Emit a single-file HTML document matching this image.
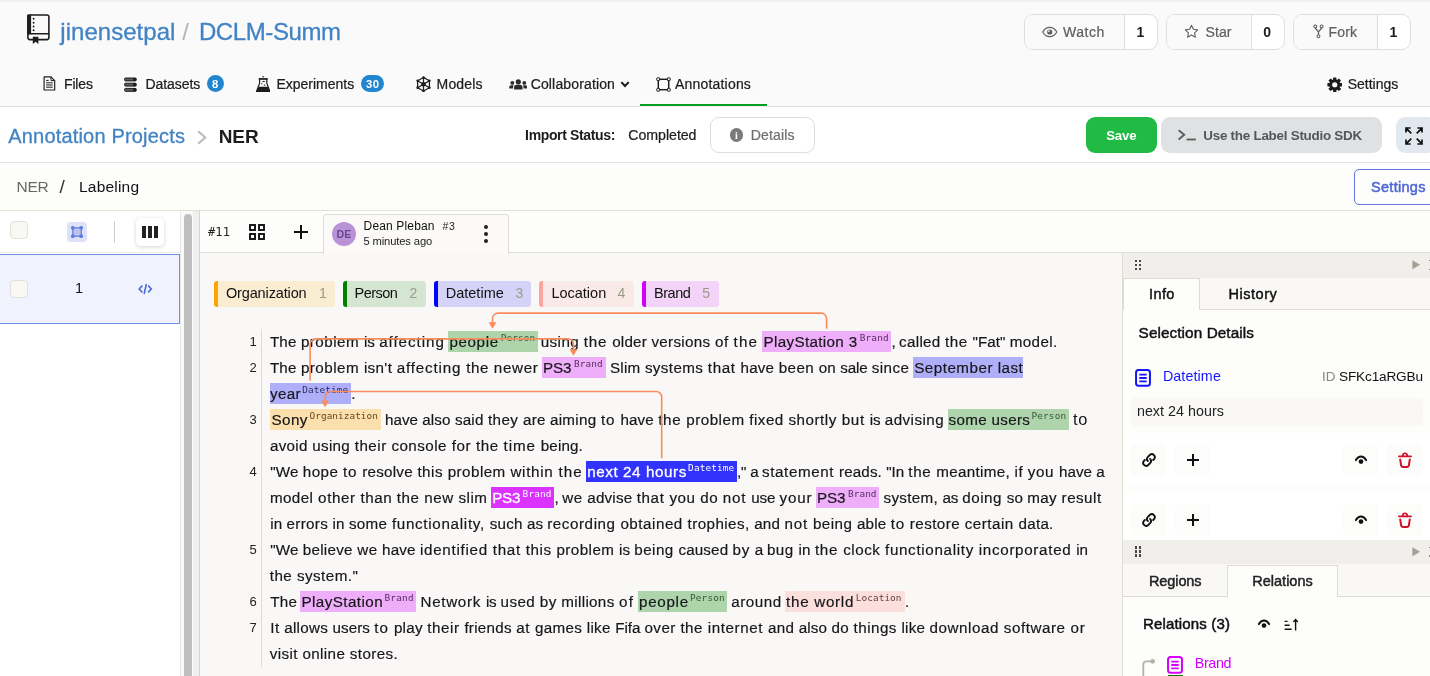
<!DOCTYPE html>
<html lang="en">
<head>
<meta charset="utf-8">
<title>jinensetpal/DCLM-Summ - Annotations</title>
<style>
html,body{margin:0;padding:0;}
body{width:1430px;height:676px;overflow:hidden;background:#fdfdfc;font-family:'Liberation Sans',sans-serif;}
#app{position:relative;width:1430px;height:676px;overflow:hidden;will-change:transform;}
#app div,#app span.t,#app svg{position:absolute;}
#app div{box-sizing:border-box;}
span.t{white-space:pre;}
span.b{font-size:15.2px;line-height:21px;color:#17161a;-webkit-text-stroke:.18px currentColor;}
</style>
</head>
<body>
<div id="app">
<div style="left:0.0px;top:0.0px;width:1430.0px;height:106.0px;background:#fafafa;"></div>
<div style="left:0.0px;top:0.0px;width:1430.0px;height:3.0px;background:linear-gradient(#ebebeb,#f4f4f4 40%,#fafafa);"></div>
<div style="left:0.0px;top:106.0px;width:1430.0px;height:1.0px;background:#dcdcdc;"></div>
<div style="left:0.0px;top:107.0px;width:1430.0px;height:55.0px;background:#ffffff;"></div>
<div style="left:0.0px;top:162.0px;width:1430.0px;height:1.0px;background:#e4e4e4;"></div>
<svg style="left:26.0px;top:12.5px;" width="25.0" height="32.0" viewBox="0 0 25 32"><rect x="1.9" y="2" width="21" height="24.6" rx="2" fill="none" stroke="#1e1e1e" stroke-width="1.6"/><rect x="1.2" y="1.6" width="3.9" height="19.6" fill="#1e1e1e"/><rect x="1.5" y="20" width="21.5" height="1.5" fill="#1e1e1e"/><circle cx="7.6" cy="5.8" r="0.95" fill="#1e1e1e"/><circle cx="7.6" cy="9.7" r="0.95" fill="#1e1e1e"/><circle cx="7.6" cy="13.5" r="0.95" fill="#1e1e1e"/><circle cx="7.6" cy="17.3" r="0.95" fill="#1e1e1e"/><path d="M6.8 23.8h5.6v7.2l-2.8-2.3-2.8 2.3z" fill="#1e1e1e"/></svg>
<span class="t" style="left:60.3px;top:15.0px;line-height:34px;font-size:24px;color:#4183c4;letter-spacing:0.038px;-webkit-text-stroke:.3px currentColor;">jinensetpal</span>
<span class="t" style="left:182.3px;top:15.0px;line-height:34px;font-size:24px;color:#b3b3b3;">/</span>
<span class="t" style="left:198.9px;top:15.0px;line-height:34px;font-size:24px;color:#4183c4;letter-spacing:-0.400px;-webkit-text-stroke:.3px currentColor;">DCLM-Summ</span>
<div style="left:1024px;top:14px;width:133.5px;height:35.5px;border:1px solid #dededf;border-radius:9px;background:#fff;overflow:hidden"><div style="left:0;top:0;width:100px;height:34px;background:#fafafa;border-right:1px solid #dededf"></div></div>
<div style="left:1166px;top:14px;width:118.5px;height:35.5px;border:1px solid #dededf;border-radius:9px;background:#fff;overflow:hidden"><div style="left:0;top:0;width:85px;height:34px;background:#fafafa;border-right:1px solid #dededf"></div></div>
<div style="left:1293px;top:14px;width:117.5px;height:35.5px;border:1px solid #dededf;border-radius:9px;background:#fff;overflow:hidden"><div style="left:0;top:0;width:83.5px;height:34px;background:#fafafa;border-right:1px solid #dededf"></div></div>
<svg style="left:1042.0px;top:25.5px;" width="15.5" height="12.0" viewBox="0 0 15.5 12"><path d="M0.7 6C2.4 2.9 4.9 1.3 7.75 1.3S13.1 2.9 14.8 6C13.1 9.1 10.6 10.7 7.75 10.7S2.4 9.1 0.7 6z" fill="none" stroke="#5f5f5f" stroke-width="1.2"/><circle cx="7.75" cy="6" r="2.6" fill="#5f5f5f"/><circle cx="6.9" cy="5.1" r="0.9" fill="#fafafa"/></svg>
<span class="t" style="left:1063.1px;top:22.0px;line-height:20px;font-size:14px;color:#5f5f5f;letter-spacing:0.517px;-webkit-text-stroke:.22px currentColor;">Watch</span>
<span class="t" style="left:1136.6px;top:22.0px;line-height:20px;font-size:14px;color:#1b1c1d;font-weight:700;">1</span>
<svg style="left:1184.0px;top:24.0px;" width="15.0" height="15.0" viewBox="0 0 15 15"><path d="M7.5 1.3l1.9 4 4.3.6-3.1 3 .75 4.3L7.5 11.1 3.65 13.2l.75-4.3-3.1-3 4.3-.6z" fill="none" stroke="#5f5f5f" stroke-width="1.1" stroke-linejoin="round"/></svg>
<span class="t" style="left:1205.6px;top:22.0px;line-height:20px;font-size:14px;color:#5f5f5f;letter-spacing:0.028px;-webkit-text-stroke:.22px currentColor;">Star</span>
<span class="t" style="left:1263.2px;top:22.0px;line-height:20px;font-size:14px;color:#1b1c1d;font-weight:700;">0</span>
<svg style="left:1313.0px;top:24.0px;" width="11.0" height="15.0" viewBox="0 0 11 15"><g fill="none" stroke="#5f5f5f" stroke-width="1.05"><circle cx="2.3" cy="2.4" r="1.45"/><circle cx="8.6" cy="2.4" r="1.45"/><circle cx="5.45" cy="12.2" r="1.45"/><path d="M2.5 3.9C2.9 6.3 5.45 6.4 5.45 8.6V10.7M8.4 3.9C8 6.3 5.45 6.4 5.45 8.6" stroke-width="1.25"/></g></svg>
<span class="t" style="left:1328.6px;top:22.0px;line-height:20px;font-size:14px;color:#5f5f5f;letter-spacing:0.138px;-webkit-text-stroke:.22px currentColor;">Fork</span>
<span class="t" style="left:1389.4px;top:22.0px;line-height:20px;font-size:14px;color:#1b1c1d;font-weight:700;">1</span>
<svg style="left:42.5px;top:76.3px;" width="13.0" height="15.0" viewBox="0 0 13 15"><path d="M1.1 .9h6.9l3.7 3.7v9.4H1.1z" fill="none" stroke="#1b1c1d" stroke-width="1.15" stroke-linejoin="round"/><path d="M8 .9v3.7h3.7" fill="none" stroke="#1b1c1d" stroke-width="1"/><path d="M3.1 4.4h2.6M3.1 6.8h6.6M3.1 9h6.6M3.1 11.2h6.6" stroke="#1b1c1d" stroke-width="1"/></svg>
<span class="t" style="left:64.0px;top:74.0px;line-height:20px;font-size:14px;color:#1b1c1d;letter-spacing:-0.151px;-webkit-text-stroke:.22px currentColor;">Files</span>
<svg style="left:124.0px;top:76.5px;" width="13.0" height="15.0" viewBox="0 0 13 15"><g fill="#5c5c5c" stroke="#1b1c1d" stroke-width="1"><rect x=".6" y="1" width="11.6" height="2.9" rx="1"/><rect x=".6" y="6.2" width="11.6" height="2.9" rx="1"/><rect x=".6" y="11.4" width="11.6" height="2.9" rx="1"/></g><g fill="#1b1c1d"><rect x="9.2" y="1" width="3" height="2.9"/><rect x="9.2" y="6.2" width="3" height="2.9"/><rect x="9.2" y="11.4" width="3" height="2.9"/></g></svg>
<span class="t" style="left:145.4px;top:74.0px;line-height:20px;font-size:14px;color:#1b1c1d;letter-spacing:-0.049px;-webkit-text-stroke:.22px currentColor;">Datasets</span>
<div style="left:207px;top:75px;width:17px;height:17px;border-radius:9px;background:#2185d0"></div>
<span class="t" style="left:211.9px;top:76.0px;line-height:16px;font-size:11.3px;color:#fff;font-weight:700;">8</span>
<svg style="left:255.8px;top:75.5px;" width="14.4" height="16.5" viewBox="0 0 14.4 16.5"><path d="M3.6 2.9h7.2v4.3l3 7.9c.2.6-.1.9-.7.9H1.3c-.6 0-.9-.3-.7-.9l3-7.9z" fill="none" stroke="#1b1c1d" stroke-width="1.2"/><path d="M2.6 10.7h9.2l2.2 4.7c.2.4 0 .7-.5.7H.9c-.5 0-.7-.3-.5-.7z" fill="#1b1c1d"/><rect x="2.6" y="2.3" width="9.2" height="1.3" fill="#1b1c1d"/><rect x="6.3" y=".3" width="1.8" height="1" fill="#1b1c1d"/><rect x="6.4" y="5" width="2.4" height="1" fill="#1b1c1d"/><rect x="5.2" y="7.2" width="1.2" height="1" fill="#1b1c1d"/><rect x="7.8" y="8.6" width="1.6" height="1" fill="#1b1c1d"/></svg>
<span class="t" style="left:276.4px;top:74.0px;line-height:20px;font-size:14px;color:#1b1c1d;-webkit-text-stroke:.22px currentColor;">Experiments</span>
<div style="left:361px;top:75.2px;width:23px;height:17px;border-radius:9px;background:#2185d0"></div>
<span class="t" style="left:365.9px;top:76.0px;line-height:16px;font-size:11.3px;color:#fff;font-weight:700;letter-spacing:0.503px;">30</span>
<svg style="left:416.2px;top:75.7px;" width="15.0" height="16.5" viewBox="0 0 15 16.5"><g fill="none" stroke="#1b1c1d" stroke-width="1.25"><path d="M7.5 1.4l5.9 3.4v6.9l-5.9 3.4-5.9-3.4V4.8z"/><path d="M7.5 1.4v13.7M1.6 4.8l11.8 6.9M13.4 4.8L1.6 11.7"/></g><g fill="#1b1c1d"><circle cx="7.5" cy="8.25" r="2.3"/><circle cx="7.5" cy="1.4" r="1.25"/><circle cx="7.5" cy="15.1" r="1.25"/><circle cx="1.6" cy="4.8" r="1.25"/><circle cx="13.4" cy="4.8" r="1.25"/><circle cx="1.6" cy="11.7" r="1.25"/><circle cx="13.4" cy="11.7" r="1.25"/></g></svg>
<span class="t" style="left:436.6px;top:74.0px;line-height:20px;font-size:14px;color:#1b1c1d;letter-spacing:0.153px;-webkit-text-stroke:.22px currentColor;">Models</span>
<svg style="left:508.5px;top:79.3px;" width="18.5" height="10.7" viewBox="0 0 18.5 10.7"><g fill="#2a2a2a"><circle cx="9.3" cy="2.8" r="2.6"/><path d="M5.1 10.4V8.100c0-1.500 1-2.400 2.400-2.400h3.600c1.400 0 2.400.9 2.400 2.400v2.300z"/><circle cx="3.3" cy="3.9" r="1.95"/><path d="M.2 9.600V8.300c0-1.300.8-2 2-2h2.600c-.5.500-.7 1.100-.7 1.900v1.400z"/><circle cx="15.300" cy="3.900" r="1.950"/><path d="M18.400 9.600V8.300c0-1.300-.8-2-2-2h-2.600c.5.500.7 1.100.7 1.900v1.400z"/></g></svg>
<span class="t" style="left:530.7px;top:74.0px;line-height:20px;font-size:14px;color:#1b1c1d;letter-spacing:0.143px;-webkit-text-stroke:.22px currentColor;">Collaboration</span>
<svg style="left:619.6px;top:80.2px;" width="10.0" height="9.0" viewBox="0 0 10 9"><path d="M1.3 2.1l3.7 3.9 3.700-3.900" fill="none" stroke="#1b1c1d" stroke-width="2.1"/></svg>
<svg style="left:655.5px;top:77.0px;" width="15.0" height="15.0" viewBox="0 0 15 15"><rect x="2.3" y="2.3" width="10.4" height="10.4" fill="none" stroke="#1b1c1d" stroke-width="1.45"/><g fill="#fafafa" stroke="#1b1c1d" stroke-width="1"><rect x=".8" y=".8" width="2.8" height="2.8" rx=".6"/><rect x="11.4" y=".8" width="2.8" height="2.8" rx=".6"/><rect x=".8" y="11.4" width="2.8" height="2.8" rx=".6"/><rect x="11.4" y="11.4" width="2.8" height="2.8" rx=".6"/></g></svg>
<span class="t" style="left:675.0px;top:74.0px;line-height:20px;font-size:14px;color:#1b1c1d;letter-spacing:0.193px;-webkit-text-stroke:.22px currentColor;">Annotations</span>
<div style="left:640.0px;top:103.0px;width:127.0px;height:1.0px;background:#fdfdfd;"></div>
<div style="left:640.0px;top:104.0px;width:127.0px;height:2.2px;background:#069d26;"></div>
<div style="left:640.0px;top:106.2px;width:127.0px;height:0.8px;background:#f6eef6;"></div>
<svg style="left:1326.5px;top:76.5px;" width="15.5" height="15.5" viewBox="0 0 16 16"><g transform="translate(8 8)" fill="#1b1c1d"><rect x="-1.7" y="-7.6" width="3.4" height="4" rx=".5" transform="rotate(0)"/><rect x="-1.7" y="-7.6" width="3.4" height="4" rx=".5" transform="rotate(45)"/><rect x="-1.7" y="-7.6" width="3.4" height="4" rx=".5" transform="rotate(90)"/><rect x="-1.7" y="-7.6" width="3.4" height="4" rx=".5" transform="rotate(135)"/><rect x="-1.7" y="-7.6" width="3.4" height="4" rx=".5" transform="rotate(180)"/><rect x="-1.7" y="-7.6" width="3.4" height="4" rx=".5" transform="rotate(225)"/><rect x="-1.7" y="-7.6" width="3.4" height="4" rx=".5" transform="rotate(270)"/><rect x="-1.7" y="-7.6" width="3.4" height="4" rx=".5" transform="rotate(315)"/><circle r="5.7"/><circle r="2.7" fill="#fafafa"/></g></svg>
<span class="t" style="left:1347.7px;top:74.0px;line-height:20px;font-size:14px;color:#1b1c1d;-webkit-text-stroke:.22px currentColor;">Settings</span>
<span class="t" style="left:8.3px;top:122.0px;line-height:28px;font-size:20px;color:#4183c4;letter-spacing:0.177px;-webkit-text-stroke:.3px currentColor;">Annotation Projects</span>
<svg style="left:196.0px;top:128.5px;" width="12.0" height="17.0" viewBox="0 0 12 17"><path d="M2.2 2.3l7 6.2-7 6.2" fill="none" stroke="#bcbcbc" stroke-width="2.2"/></svg>
<span class="t" style="left:218.8px;top:123.0px;line-height:27px;font-size:19px;color:#1b1c1d;font-weight:700;letter-spacing:-0.144px;">NER</span>
<span class="t" style="left:525.1px;top:125.0px;line-height:20px;font-size:14px;color:#1b1c1d;font-weight:700;letter-spacing:-0.356px;">Import Status:</span>
<span class="t" style="left:628.3px;top:125.0px;line-height:20px;font-size:14.2px;color:#1b1c1d;letter-spacing:-0.051px;-webkit-text-stroke:.22px currentColor;">Completed</span>
<div style="left:710px;top:117px;width:105px;height:36px;border:1px solid #dededf;border-radius:9px;background:#fff"></div>
<div style="left:730px;top:128.3px;width:13.3px;height:13.3px;border-radius:7px;background:#7a7a7a"></div>
<span class="t" style="left:735.1px;top:129.0px;line-height:14px;font-size:10px;color:#fff;font-weight:700;font-family:'Liberation Serif',serif;">i</span>
<span class="t" style="left:750.7px;top:125.0px;line-height:20px;font-size:14.1px;color:#6f6f6f;letter-spacing:0.138px;-webkit-text-stroke:.22px currentColor;">Details</span>
<div style="left:1086px;top:117px;width:71px;height:36px;border-radius:9px;background:#21ba45"></div>
<span class="t" style="left:1106.2px;top:127.0px;line-height:18px;font-size:13.2px;color:#fff;font-weight:700;letter-spacing:-0.135px;">Save</span>
<div style="left:1161px;top:117px;width:221.3px;height:36px;border-radius:9px;background:#e0e1e2"></div>
<svg style="left:1177.0px;top:127.5px;" width="20.0" height="14.0" viewBox="0 0 20 14"><path d="M1.6 2.2l5.6 4.6-5.6 4.6" fill="none" stroke="#5b5b5b" stroke-width="1.9"/><rect x="9.6" y="10.6" width="9.2" height="1.8" fill="#5b5b5b"/></svg>
<span class="t" style="left:1203.3px;top:126.0px;line-height:19px;font-size:13.4px;color:#555657;font-weight:700;letter-spacing:-0.242px;">Use the Label Studio SDK</span>
<div style="left:1396px;top:117px;width:40px;height:36px;border-radius:9px;background:#e2e8f0"></div>
<svg style="left:1404.0px;top:125.5px;" width="20.0" height="20.0" viewBox="0 0 20 20"><g fill="none" stroke="#111" stroke-width="1.7"><path d="M2 6.6V2h4.6M2.3 2.3l5 5M18 6.6V2h-4.6M17.7 2.3l-5 5M2 13.4V18h4.6M2.3 17.7l5-5M18 13.4V18h-4.6M17.7 17.7l-5-5"/></g></svg>
<div style="left:0.0px;top:163.0px;width:1430.0px;height:47.0px;background:#fdfdfc;"></div>
<div style="left:0.0px;top:210.0px;width:1430.0px;height:1.0px;background:#e3e0d8;"></div>
<span class="t" style="left:16.5px;top:176.0px;line-height:22px;font-size:15.5px;color:#6b6860;letter-spacing:-0.307px;">NER</span>
<span class="t" style="left:59.5px;top:173.0px;line-height:27px;font-size:19px;color:#33312c;">/</span>
<span class="t" style="left:79.0px;top:176.0px;line-height:22px;font-size:15.5px;color:#111;letter-spacing:0.208px;">Labeling</span>
<div style="left:1354px;top:169px;width:90px;height:36px;border:1px solid #6478dc;border-radius:5px;background:#fdfdfc"></div>
<span class="t" style="left:1371.0px;top:177.0px;line-height:20px;font-size:14.5px;color:#4f66d4;letter-spacing:0.294px;-webkit-text-stroke:.5px currentColor;">Settings</span>
<div style="left:0.0px;top:211.0px;width:180.0px;height:465.0px;background:#ffffff;"></div>
<div style="left:180.0px;top:211.0px;width:1.0px;height:465.0px;background:#e8e8e8;"></div>
<div style="left:181.0px;top:211.0px;width:12.0px;height:465.0px;background:#fafafa;"></div>
<div style="left:184.2px;top:214px;width:7.8px;height:480px;border-radius:4px;background:#bfbfbf"></div>
<div style="left:193.0px;top:211.0px;width:6.3px;height:465.0px;background:#f0f0f0;"></div>
<div style="left:199.2px;top:211.0px;width:1.0px;height:465.0px;background:#d4d4d4;"></div>
<div style="left:10px;top:221px;width:18px;height:18px;border:1px solid #e3e1d8;border-radius:4px;background:#f9f8f5"></div>
<div style="left:67px;top:222px;width:20px;height:20px;border-radius:4px;background:#dde2f8"></div>
<svg style="left:70.0px;top:225.0px;" width="14.0" height="14.0" viewBox="0 0 14 14"><rect x="2.8" y="2.8" width="8.4" height="8.4" fill="#b9c3f2" stroke="#617ada" stroke-width="1.2"/><g fill="#617ada"><circle cx="2.8" cy="2.8" r="1.9"/><circle cx="11.2" cy="2.8" r="1.9"/><circle cx="2.8" cy="11.2" r="1.9"/><circle cx="11.2" cy="11.2" r="1.9"/></g></svg>
<div style="left:114.2px;top:221.0px;width:1.0px;height:22.0px;background:#cfcdc8;"></div>
<div style="left:136px;top:218px;width:28px;height:28px;border-radius:5px;background:#fff;box-shadow:0 1px 4px rgba(0,0,0,.18)"></div>
<div style="left:141.8px;top:226.0px;width:4.0px;height:12.0px;background:#222;"></div>
<div style="left:147.9px;top:226.0px;width:4.0px;height:12.0px;background:#222;"></div>
<div style="left:154.0px;top:226.0px;width:4.0px;height:12.0px;background:#222;"></div>
<div style="left:0.0px;top:252.0px;width:180.0px;height:1.0px;background:#ece6e6;"></div>
<div style="left:0px;top:254px;width:180px;height:69.5px;border:1px solid #6f8fe3;border-left:none;background:#f0f2fd"></div>
<div style="left:10px;top:280px;width:18px;height:18px;border:1px solid #e3e1d8;border-radius:4px;background:#f9f8f5"></div>
<span class="t" style="left:75.0px;top:278.0px;line-height:20px;font-size:14.5px;color:#111;">1</span>
<svg style="left:138.0px;top:283.0px;" width="14.5" height="12.0" viewBox="0 0 14.5 12"><g fill="none" stroke="#4a6bd8" stroke-width="1.6"><path d="M4.3 2.6L1.2 6l3.1 3.4M10.2 2.6L13.3 6l-3.1 3.4M8.4 1L6.1 11"/></g></svg>
<div style="left:200.0px;top:211.0px;width:1230.0px;height:41.5px;background:#fdfdfc;"></div>
<div style="left:200.0px;top:252.0px;width:923.0px;height:424.0px;background:#f9f8f6;"></div>
<div style="left:200.0px;top:252.0px;width:1230.0px;height:1.0px;background:#e3e0d8;"></div>
<span class="t" style="left:207.9px;top:224.0px;line-height:17px;font-size:12px;color:#222;font-family:'DejaVu Sans Mono','Liberation Mono',monospace;letter-spacing:0.194px;">#11</span>
<svg style="left:249.0px;top:224.0px;" width="16.0" height="16.0" viewBox="0 0 16 16"><g fill="none" stroke="#111" stroke-width="1.9"><rect x="1" y="1" width="5" height="5"/><rect x="10" y="1" width="5" height="5"/><rect x="1" y="10" width="5" height="5"/><rect x="10" y="10" width="5" height="5"/></g></svg>
<div style="left:300.0px;top:225.0px;width:1.8px;height:14.0px;background:#111;"></div>
<div style="left:293.9px;top:231.1px;width:14.0px;height:1.8px;background:#111;"></div>
<div style="left:323px;top:214px;width:186px;height:39.5px;border:1px solid #e0ddd5;border-bottom:none;border-radius:4px 4px 0 0;background:#fbfaf8"></div>
<div style="left:332px;top:222px;width:24px;height:24px;border-radius:12px;background:#b993d6"></div>
<span class="t" style="left:336.4px;top:227.0px;line-height:15px;font-size:10.6px;color:#6a4693;font-weight:700;letter-spacing:0.250px;">DE</span>
<span class="t" style="left:363.6px;top:218.0px;line-height:17px;font-size:12px;color:#111;letter-spacing:0.151px;">Dean Pleban</span>
<span class="t" style="left:442.5px;top:219.0px;line-height:15px;font-size:10.5px;color:#222;letter-spacing:0.734px;">#3</span>
<span class="t" style="left:363.4px;top:233.0px;line-height:16px;font-size:11.2px;color:#222;letter-spacing:-0.116px;">5 minutes ago</span>
<div style="left:483.9px;top:225.3px;width:4px;height:4px;border-radius:2px;background:#222"></div>
<div style="left:483.9px;top:231.9px;width:4px;height:4px;border-radius:2px;background:#222"></div>
<div style="left:483.9px;top:238.5px;width:4px;height:4px;border-radius:2px;background:#222"></div>
<div style="left:214px;top:281px;width:120.7px;height:26px;border-radius:3px;background:#faecd1;border-left:4px solid #ffa500"></div>
<span class="t" style="left:225.9px;top:283.0px;line-height:20px;font-size:14.5px;color:#111;letter-spacing:-0.131px;">Organization</span>
<span class="t" style="left:318.9px;top:283.0px;line-height:20px;font-size:14px;color:#9e9889;">1</span>
<div style="left:343px;top:281px;width:82.9px;height:26px;border-radius:3px;background:#d4e6d1;border-left:4px solid #008000"></div>
<span class="t" style="left:354.5px;top:283.0px;line-height:20px;font-size:14.5px;color:#111;letter-spacing:-0.535px;">Person</span>
<span class="t" style="left:409.5px;top:283.0px;line-height:20px;font-size:14px;color:#9e9889;">2</span>
<div style="left:434.2px;top:281px;width:96.7px;height:26px;border-radius:3px;background:#d4d3f7;border-left:4px solid #0000ff"></div>
<span class="t" style="left:445.7px;top:283.0px;line-height:20px;font-size:14.5px;color:#111;letter-spacing:0.011px;">Datetime</span>
<span class="t" style="left:515.5px;top:283.0px;line-height:20px;font-size:14px;color:#9e9889;">3</span>
<div style="left:539.1px;top:281px;width:94.7px;height:26px;border-radius:3px;background:#faeae7;border-left:4px solid #ffa39e"></div>
<span class="t" style="left:551.4px;top:283.0px;line-height:20px;font-size:14.5px;color:#111;">Location</span>
<span class="t" style="left:617.6px;top:283.0px;line-height:20px;font-size:14px;color:#9e9889;">4</span>
<div style="left:642.1px;top:281px;width:76.8px;height:26px;border-radius:3px;background:#f3d3f7;border-left:4px solid #d400ff"></div>
<span class="t" style="left:654.1px;top:283.0px;line-height:20px;font-size:14.5px;color:#111;letter-spacing:-0.509px;">Brand</span>
<span class="t" style="left:702.2px;top:283.0px;line-height:20px;font-size:14px;color:#9e9889;">5</span>
<div style="left:261.0px;top:329.0px;width:1.0px;height:338.0px;background:#dedbd3;"></div>
<span class="t" style="left:249.5px;top:333.0px;line-height:18px;font-size:13px;color:#222;">1</span>
<span class="t" style="left:249.5px;top:359.0px;line-height:18px;font-size:13px;color:#222;">2</span>
<span class="t" style="left:249.5px;top:411.0px;line-height:18px;font-size:13px;color:#222;">3</span>
<span class="t" style="left:249.5px;top:463.0px;line-height:18px;font-size:13px;color:#222;">4</span>
<span class="t" style="left:249.5px;top:541.0px;line-height:18px;font-size:13px;color:#222;">5</span>
<span class="t" style="left:249.5px;top:593.0px;line-height:18px;font-size:13px;color:#222;">6</span>
<span class="t" style="left:249.5px;top:619.0px;line-height:18px;font-size:13px;color:#222;">7</span>
<span class="t b" style="left:269.9px;top:331.0px;letter-spacing:0.152px;">The </span>
<span class="t b" style="left:300.9px;top:331.0px;letter-spacing:0.488px;">problem </span>
<span class="t b" style="left:363.9px;top:331.0px;letter-spacing:0.038px;">is </span>
<span class="t b" style="left:379.2px;top:331.0px;letter-spacing:0.942px;">affecting</span>
<div style="left:448.0px;top:331.2px;width:89.9px;height:20.6px;background:#aed4ac;"></div>
<span class="t b" style="left:449.4px;top:331.0px;letter-spacing:0.626px;">people</span>
<span class="t" style="left:500.7px;top:331.0px;line-height:13px;font-size:9.4px;color:#3a5836;font-family:'DejaVu Sans Mono','Liberation Mono',monospace;letter-spacing:0.118px;">Person</span>
<span class="t b" style="left:540.7px;top:331.0px;letter-spacing:0.428px;">using </span>
<span class="t b" style="left:583.8px;top:331.0px;letter-spacing:0.764px;">the </span>
<span class="t b" style="left:612.2px;top:331.0px;letter-spacing:0.200px;">older </span>
<span class="t b" style="left:651.4px;top:331.0px;letter-spacing:0.313px;">versions </span>
<span class="t b" style="left:715.0px;top:331.0px;letter-spacing:0.570px;">of </span>
<span class="t b" style="left:733.6px;top:331.0px;letter-spacing:1.170px;">the</span>
<div style="left:762.1px;top:331.2px;width:128.9px;height:20.6px;background:#eeaef9;"></div>
<span class="t b" style="left:763.5px;top:331.0px;letter-spacing:0.348px;">PlayStation 3</span>
<span class="t" style="left:859.7px;top:331.0px;line-height:13px;font-size:9.4px;color:#5a2d62;font-family:'DejaVu Sans Mono','Liberation Mono',monospace;letter-spacing:0.198px;">Brand</span>
<span class="t b" style="left:891.5px;top:331.0px;letter-spacing:-0.427px;">, </span>
<span class="t b" style="left:899.1px;top:331.0px;letter-spacing:0.299px;">called </span>
<span class="t b" style="left:945.1px;top:331.0px;letter-spacing:0.514px;">the </span>
<span class="t b" style="left:972.5px;top:331.0px;letter-spacing:0.041px;">"Fat" </span>
<span class="t b" style="left:1009.7px;top:331.0px;letter-spacing:0.392px;">model.</span>
<span class="t b" style="left:269.9px;top:357.0px;letter-spacing:0.152px;">The </span>
<span class="t b" style="left:300.9px;top:357.0px;letter-spacing:0.488px;">problem </span>
<span class="t b" style="left:363.9px;top:357.0px;letter-spacing:0.356px;">isn't </span>
<span class="t b" style="left:396.8px;top:357.0px;letter-spacing:0.814px;">affecting </span>
<span class="t b" style="left:466.3px;top:357.0px;letter-spacing:0.539px;">the </span>
<span class="t b" style="left:493.8px;top:357.0px;letter-spacing:0.661px;">newer</span>
<div style="left:542.0px;top:357.2px;width:64.0px;height:20.6px;background:#eeaef9;"></div>
<span class="t b" style="left:542.9px;top:357.0px;letter-spacing:-0.107px;">PS3</span>
<span class="t" style="left:574.0px;top:357.0px;line-height:13px;font-size:9.4px;color:#5a2d62;font-family:'DejaVu Sans Mono','Liberation Mono',monospace;letter-spacing:0.132px;">Brand</span>
<span class="t b" style="left:609.9px;top:357.0px;letter-spacing:0.250px;">Slim </span>
<span class="t b" style="left:644.9px;top:357.0px;letter-spacing:0.372px;">systems </span>
<span class="t b" style="left:707.8px;top:357.0px;letter-spacing:0.627px;">that </span>
<span class="t b" style="left:740.5px;top:357.0px;letter-spacing:0.209px;">have </span>
<span class="t b" style="left:778.7px;top:357.0px;letter-spacing:0.417px;">been </span>
<span class="t b" style="left:818.8px;top:357.0px;letter-spacing:0.125px;">on </span>
<span class="t b" style="left:840.3px;top:357.0px;letter-spacing:-0.139px;">sale </span>
<span class="t b" style="left:871.7px;top:357.0px;letter-spacing:0.463px;">since</span>
<div style="left:913.1px;top:357.2px;width:110.0px;height:20.6px;background:#aeaef9;"></div>
<span class="t b" style="left:914.2px;top:357.0px;letter-spacing:0.496px;">September last</span>
<div style="left:270.0px;top:383.2px;width:80.8px;height:20.6px;background:#aeaef9;"></div>
<span class="t b" style="left:270.1px;top:383.0px;letter-spacing:0.287px;">year</span>
<span class="t" style="left:302.3px;top:383.0px;line-height:13px;font-size:9.4px;color:#303066;font-family:'DejaVu Sans Mono','Liberation Mono',monospace;letter-spacing:0.103px;">Datetime</span>
<span class="t b" style="left:351.2px;top:383.0px;">.</span>
<div style="left:270.0px;top:409.2px;width:110.8px;height:20.6px;background:#fbdfac;"></div>
<span class="t b" style="left:271.4px;top:409.0px;letter-spacing:0.465px;">Sony</span>
<span class="t" style="left:309.6px;top:409.0px;line-height:13px;font-size:9.4px;color:#5e4a24;font-family:'DejaVu Sans Mono','Liberation Mono',monospace;letter-spacing:0.051px;">Organization</span>
<span class="t b" style="left:385.1px;top:409.0px;">have </span>
<span class="t b" style="left:422.3px;top:409.0px;letter-spacing:0.121px;">also </span>
<span class="t b" style="left:455.0px;top:409.0px;letter-spacing:0.161px;">said </span>
<span class="t b" style="left:487.9px;top:409.0px;letter-spacing:0.452px;">they </span>
<span class="t b" style="left:523.1px;top:409.0px;letter-spacing:0.157px;">are </span>
<span class="t b" style="left:549.9px;top:409.0px;letter-spacing:0.290px;">aiming </span>
<span class="t b" style="left:600.9px;top:409.0px;letter-spacing:0.870px;">to </span>
<span class="t b" style="left:620.4px;top:409.0px;letter-spacing:0.129px;">have </span>
<span class="t b" style="left:658.2px;top:409.0px;letter-spacing:0.664px;">the </span>
<span class="t b" style="left:686.2px;top:409.0px;letter-spacing:0.501px;">problem </span>
<span class="t b" style="left:749.3px;top:409.0px;letter-spacing:0.465px;">fixed </span>
<span class="t b" style="left:788.4px;top:409.0px;letter-spacing:0.543px;">shortly </span>
<span class="t b" style="left:841.7px;top:409.0px;letter-spacing:0.664px;">but </span>
<span class="t b" style="left:869.7px;top:409.0px;letter-spacing:-0.029px;">is </span>
<span class="t b" style="left:884.8px;top:409.0px;letter-spacing:0.442px;">advising</span>
<div style="left:948.0px;top:409.2px;width:121.0px;height:20.6px;background:#aed4ac;"></div>
<span class="t b" style="left:948.5px;top:409.0px;letter-spacing:0.321px;">some users</span>
<span class="t" style="left:1031.4px;top:409.0px;line-height:13px;font-size:9.4px;color:#3a5836;font-family:'DejaVu Sans Mono','Liberation Mono',monospace;letter-spacing:0.173px;">Person</span>
<span class="t" style="left:1073.1px;top:408.0px;line-height:23px;font-size:16.4px;color:#17161a;letter-spacing:0.564px;">to</span>
<span class="t b" style="left:269.9px;top:435.0px;letter-spacing:0.295px;">avoid </span>
<span class="t b" style="left:312.2px;top:435.0px;letter-spacing:0.328px;">using </span>
<span class="t b" style="left:354.7px;top:435.0px;letter-spacing:0.489px;">their </span>
<span class="t b" style="left:391.4px;top:435.0px;letter-spacing:0.465px;">console </span>
<span class="t b" style="left:451.7px;top:435.0px;letter-spacing:0.612px;">for </span>
<span class="t b" style="left:476.1px;top:435.0px;letter-spacing:0.539px;">the </span>
<span class="t b" style="left:503.6px;top:435.0px;letter-spacing:0.856px;">time </span>
<span class="t b" style="left:540.8px;top:435.0px;letter-spacing:0.120px;">being.</span>
<span class="t b" style="left:270.3px;top:461.0px;letter-spacing:0.094px;">"We </span>
<span class="t b" style="left:302.8px;top:461.0px;letter-spacing:0.437px;">hope </span>
<span class="t b" style="left:343.0px;top:461.0px;letter-spacing:0.770px;">to </span>
<span class="t b" style="left:362.2px;top:461.0px;letter-spacing:0.252px;">resolve </span>
<span class="t b" style="left:417.4px;top:461.0px;letter-spacing:0.488px;">this </span>
<span class="t b" style="left:447.7px;top:461.0px;letter-spacing:0.451px;">problem </span>
<span class="t b" style="left:510.4px;top:461.0px;letter-spacing:0.705px;">within </span>
<span class="t b" style="left:558.4px;top:461.0px;letter-spacing:1.050px;">the</span>
<div style="left:586.1px;top:461.2px;width:150.8px;height:20.6px;background:#3232fd;"></div>
<span class="t b" style="left:587.2px;top:461.0px;color:#fff;letter-spacing:0.594px;-webkit-text-stroke:.3px currentColor;">next 24 hours</span>
<span class="t" style="left:688.1px;top:461.0px;line-height:13px;font-size:9.4px;color:#fff;font-family:'DejaVu Sans Mono','Liberation Mono',monospace;letter-spacing:0.143px;">Datetime</span>
<span class="t b" style="left:737.1px;top:461.0px;letter-spacing:-0.215px;">," </span>
<span class="t b" style="left:750.3px;top:461.0px;letter-spacing:-0.486px;">a </span>
<span class="t b" style="left:762.0px;top:461.0px;letter-spacing:0.608px;">statement </span>
<span class="t b" style="left:839.0px;top:461.0px;letter-spacing:0.123px;">reads. </span>
<span class="t b" style="left:886.3px;top:461.0px;letter-spacing:-0.070px;">"In </span>
<span class="t b" style="left:908.3px;top:461.0px;letter-spacing:0.664px;">the </span>
<span class="t b" style="left:936.3px;top:461.0px;letter-spacing:0.317px;">meantime, </span>
<span class="t b" style="left:1014.6px;top:461.0px;letter-spacing:0.424px;">if </span>
<span class="t b" style="left:1027.7px;top:461.0px;letter-spacing:0.645px;">you </span>
<span class="t b" style="left:1059.0px;top:461.0px;">have </span>
<span class="t b" style="left:1096.2px;top:461.0px;">a</span>
<span class="t b" style="left:269.9px;top:487.0px;letter-spacing:0.434px;">model </span>
<span class="t b" style="left:318.1px;top:487.0px;letter-spacing:0.609px;">other </span>
<span class="t b" style="left:360.6px;top:487.0px;letter-spacing:0.484px;">than </span>
<span class="t b" style="left:396.8px;top:487.0px;letter-spacing:0.514px;">the </span>
<span class="t b" style="left:424.2px;top:487.0px;letter-spacing:0.552px;">new </span>
<span class="t b" style="left:458.5px;top:487.0px;letter-spacing:0.472px;">slim</span>
<div style="left:491.0px;top:487.2px;width:63.0px;height:20.6px;background:#db32fd;"></div>
<span class="t b" style="left:492.2px;top:487.0px;color:#fff;letter-spacing:-0.227px;-webkit-text-stroke:.3px currentColor;">PS3</span>
<span class="t" style="left:522.6px;top:487.0px;line-height:13px;font-size:9.4px;color:#fff;font-family:'DejaVu Sans Mono','Liberation Mono',monospace;letter-spacing:0.176px;">Brand</span>
<span class="t b" style="left:554.6px;top:487.0px;letter-spacing:-0.377px;">, </span>
<span class="t b" style="left:562.3px;top:487.0px;letter-spacing:0.453px;">we </span>
<span class="t b" style="left:587.3px;top:487.0px;letter-spacing:0.182px;">advise </span>
<span class="t b" style="left:636.7px;top:487.0px;letter-spacing:0.627px;">that </span>
<span class="t b" style="left:669.4px;top:487.0px;letter-spacing:0.545px;">you </span>
<span class="t b" style="left:700.3px;top:487.0px;letter-spacing:0.458px;">do </span>
<span class="t b" style="left:722.8px;top:487.0px;letter-spacing:0.764px;">not </span>
<span class="t b" style="left:751.2px;top:487.0px;letter-spacing:-0.080px;">use </span>
<span class="t b" style="left:779.6px;top:487.0px;letter-spacing:0.801px;">your</span>
<div style="left:816.2px;top:487.2px;width:62.9px;height:20.6px;background:#eeaef9;"></div>
<span class="t b" style="left:817.1px;top:487.0px;letter-spacing:-0.227px;">PS3</span>
<span class="t" style="left:848.0px;top:487.0px;line-height:13px;font-size:9.4px;color:#5a2d62;font-family:'DejaVu Sans Mono','Liberation Mono',monospace;letter-spacing:0.065px;">Brand</span>
<span class="t b" style="left:883.5px;top:487.0px;letter-spacing:0.307px;">system, </span>
<span class="t b" style="left:942.5px;top:487.0px;letter-spacing:-0.155px;">as </span>
<span class="t b" style="left:962.3px;top:487.0px;letter-spacing:0.518px;">doing </span>
<span class="t b" style="left:1006.8px;top:487.0px;letter-spacing:0.078px;">so </span>
<span class="t b" style="left:1027.3px;top:487.0px;letter-spacing:0.345px;">may </span>
<span class="t b" style="left:1061.6px;top:487.0px;letter-spacing:0.475px;">result</span>
<span class="t b" style="left:270.3px;top:513.0px;letter-spacing:0.084px;">in </span>
<span class="t b" style="left:286.6px;top:513.0px;letter-spacing:0.301px;">errors </span>
<span class="t b" style="left:332.6px;top:513.0px;letter-spacing:0.084px;">in </span>
<span class="t b" style="left:348.9px;top:513.0px;letter-spacing:0.328px;">some </span>
<span class="t b" style="left:391.9px;top:513.0px;letter-spacing:0.692px;">functionality, </span>
<span class="t b" style="left:489.8px;top:513.0px;letter-spacing:0.177px;">such </span>
<span class="t b" style="left:527.0px;top:513.0px;letter-spacing:-0.022px;">as </span>
<span class="t b" style="left:547.2px;top:513.0px;letter-spacing:0.565px;">recording </span>
<span class="t b" style="left:620.4px;top:513.0px;letter-spacing:0.522px;">obtained </span>
<span class="t b" style="left:687.6px;top:513.0px;letter-spacing:0.412px;">trophies, </span>
<span class="t b" style="left:754.2px;top:513.0px;letter-spacing:0.184px;">and </span>
<span class="t b" style="left:784.5px;top:513.0px;letter-spacing:0.764px;">not </span>
<span class="t b" style="left:812.9px;top:513.0px;letter-spacing:0.452px;">being </span>
<span class="t b" style="left:857.0px;top:513.0px;letter-spacing:0.153px;">able </span>
<span class="t b" style="left:890.7px;top:513.0px;letter-spacing:0.736px;">to </span>
<span class="t b" style="left:909.8px;top:513.0px;letter-spacing:0.425px;">restore </span>
<span class="t b" style="left:964.7px;top:513.0px;letter-spacing:0.498px;">certain </span>
<span class="t b" style="left:1018.5px;top:513.0px;letter-spacing:0.260px;">data.</span>
<span class="t b" style="left:270.3px;top:539.0px;letter-spacing:0.094px;">"We </span>
<span class="t b" style="left:302.8px;top:539.0px;letter-spacing:0.268px;">believe </span>
<span class="t b" style="left:357.3px;top:539.0px;letter-spacing:0.386px;">we </span>
<span class="t b" style="left:382.1px;top:539.0px;letter-spacing:0.129px;">have </span>
<span class="t b" style="left:419.9px;top:539.0px;letter-spacing:0.717px;">identified </span>
<span class="t b" style="left:492.8px;top:539.0px;letter-spacing:0.668px;">that </span>
<span class="t b" style="left:525.7px;top:539.0px;letter-spacing:0.568px;">this </span>
<span class="t b" style="left:556.4px;top:539.0px;letter-spacing:0.451px;">problem </span>
<span class="t b" style="left:619.1px;top:539.0px;">is </span>
<span class="t b" style="left:634.3px;top:539.0px;letter-spacing:0.452px;">being </span>
<span class="t b" style="left:678.4px;top:539.0px;letter-spacing:0.142px;">caused </span>
<span class="t b" style="left:732.6px;top:539.0px;letter-spacing:0.645px;">by </span>
<span class="t b" style="left:754.8px;top:539.0px;letter-spacing:-0.286px;">a </span>
<span class="t b" style="left:766.9px;top:539.0px;letter-spacing:0.534px;">bug </span>
<span class="t b" style="left:798.6px;top:539.0px;letter-spacing:0.084px;">in </span>
<span class="t b" style="left:814.9px;top:539.0px;letter-spacing:0.764px;">the </span>
<span class="t b" style="left:843.3px;top:539.0px;letter-spacing:0.479px;">clock </span>
<span class="t b" style="left:885.0px;top:539.0px;letter-spacing:0.670px;">functionality </span>
<span class="t b" style="left:978.8px;top:539.0px;letter-spacing:0.680px;">incorporated </span>
<span class="t b" style="left:1076.3px;top:539.0px;letter-spacing:-0.185px;">in</span>
<span class="t b" style="left:269.7px;top:565.0px;letter-spacing:0.470px;">the system."</span>
<span class="t b" style="left:270.2px;top:591.0px;letter-spacing:0.232px;">The</span>
<div style="left:300.0px;top:591.2px;width:115.8px;height:20.6px;background:#eeaef9;"></div>
<span class="t b" style="left:301.4px;top:591.0px;letter-spacing:0.440px;">PlayStation</span>
<span class="t" style="left:384.4px;top:591.0px;line-height:13px;font-size:9.4px;color:#5a2d62;font-family:'DejaVu Sans Mono','Liberation Mono',monospace;letter-spacing:0.265px;">Brand</span>
<span class="t b" style="left:420.5px;top:591.0px;letter-spacing:0.685px;">Network </span>
<span class="t b" style="left:485.9px;top:591.0px;letter-spacing:-0.163px;">is </span>
<span class="t b" style="left:500.6px;top:591.0px;letter-spacing:0.409px;">used </span>
<span class="t b" style="left:539.8px;top:591.0px;letter-spacing:0.411px;">by </span>
<span class="t b" style="left:561.3px;top:591.0px;letter-spacing:0.327px;">millions </span>
<span class="t b" style="left:619.1px;top:591.0px;letter-spacing:1.200px;">of</span>
<div style="left:637.9px;top:591.2px;width:89.0px;height:20.6px;background:#aed4ac;"></div>
<span class="t b" style="left:639.1px;top:591.0px;letter-spacing:0.680px;">people</span>
<span class="t" style="left:690.0px;top:591.0px;line-height:13px;font-size:9.4px;color:#3a5836;font-family:'DejaVu Sans Mono','Liberation Mono',monospace;letter-spacing:0.155px;">Person</span>
<span class="t b" style="left:731.2px;top:591.0px;letter-spacing:0.537px;">around</span>
<div style="left:784.9px;top:591.2px;width:119.9px;height:20.6px;background:#fbdfdc;"></div>
<span class="t b" style="left:786.1px;top:591.0px;letter-spacing:0.707px;">the world</span>
<span class="t" style="left:855.8px;top:591.0px;line-height:13px;font-size:9.4px;color:#66433f;font-family:'DejaVu Sans Mono','Liberation Mono',monospace;letter-spacing:0.076px;">Location</span>
<span class="t b" style="left:905.0px;top:591.0px;">.</span>
<span class="t b" style="left:270.3px;top:617.0px;letter-spacing:0.409px;">It </span>
<span class="t b" style="left:284.2px;top:617.0px;letter-spacing:0.280px;">allows </span>
<span class="t b" style="left:332.6px;top:617.0px;letter-spacing:0.057px;">users </span>
<span class="t b" style="left:374.3px;top:617.0px;letter-spacing:0.903px;">to </span>
<span class="t b" style="left:393.9px;top:617.0px;letter-spacing:0.241px;">play </span>
<span class="t b" style="left:427.2px;top:617.0px;letter-spacing:0.572px;">their </span>
<span class="t b" style="left:464.4px;top:617.0px;letter-spacing:0.261px;">friends </span>
<span class="t b" style="left:516.3px;top:617.0px;letter-spacing:0.570px;">at </span>
<span class="t b" style="left:534.9px;top:617.0px;letter-spacing:0.348px;">games </span>
<span class="t b" style="left:586.8px;top:617.0px;letter-spacing:0.277px;">like </span>
<span class="t b" style="left:615.2px;top:617.0px;letter-spacing:-0.049px;">Fifa </span>
<span class="t b" style="left:644.5px;top:617.0px;letter-spacing:0.427px;">over </span>
<span class="t b" style="left:680.4px;top:617.0px;letter-spacing:0.514px;">the </span>
<span class="t b" style="left:707.8px;top:617.0px;letter-spacing:0.579px;">internet </span>
<span class="t b" style="left:767.9px;top:617.0px;letter-spacing:0.334px;">and </span>
<span class="t b" style="left:798.8px;top:617.0px;letter-spacing:0.121px;">also </span>
<span class="t b" style="left:831.5px;top:617.0px;letter-spacing:0.325px;">do </span>
<span class="t b" style="left:853.6px;top:617.0px;letter-spacing:0.464px;">things </span>
<span class="t b" style="left:901.6px;top:617.0px;letter-spacing:0.157px;">like </span>
<span class="t b" style="left:929.4px;top:617.0px;letter-spacing:0.572px;">download </span>
<span class="t b" style="left:1003.8px;top:617.0px;letter-spacing:0.553px;">software </span>
<span class="t b" style="left:1070.4px;top:617.0px;letter-spacing:1.024px;">or</span>
<span class="t b" style="left:269.7px;top:643.0px;letter-spacing:0.386px;">visit online stores.</span>
<svg style="left:200px;top:300px" width="923" height="180" viewBox="200 300 923 180"><g fill="none" stroke="#fa8c5c" stroke-width="1.6"><path d="M826.6 328.7V318.6a5.5 5.5 0 0 0-5.5-5.5H498a5.5 5.5 0 0 0-5.5 5.5V323"/><path d="M310.1 380.6V344.4a5.5 5.5 0 0 1 5.5-5.5H568a5.5 5.5 0 0 1 5.5 5.5V350"/><path d="M661.7 458.3V397a5.5 5.5 0 0 0-5.5-5.5H330.6a5.5 5.5 0 0 0-5.5 5.5V401.5"/></g><g fill="#fa8c5c"><path d="M488.6 322.2h7.8l-3.9 6.6z"/><path d="M569.6 349.2h7.8l-3.9 6.6z"/><path d="M321.2 400.7h7.8l-3.9 6.6z"/></g></svg>
<div style="left:1122.0px;top:253.0px;width:1.0px;height:423.0px;background:#e0ddd5;"></div>
<div style="left:1123.0px;top:253.0px;width:307.0px;height:423.0px;background:#fdfdfc;"></div>
<div style="left:1123.0px;top:253.0px;width:307.0px;height:24.5px;background:#f0efec;"></div>
<div style="left:1134.8px;top:259.7px;width:2.4px;height:2.4px;background:#4b4741;"></div>
<div style="left:1138.7px;top:259.7px;width:2.4px;height:2.4px;background:#4b4741;"></div>
<div style="left:1134.8px;top:263.7px;width:2.4px;height:2.4px;background:#4b4741;"></div>
<div style="left:1138.7px;top:263.7px;width:2.4px;height:2.4px;background:#4b4741;"></div>
<div style="left:1134.8px;top:267.7px;width:2.4px;height:2.4px;background:#4b4741;"></div>
<div style="left:1138.7px;top:267.7px;width:2.4px;height:2.4px;background:#4b4741;"></div>
<svg style="left:1411.5px;top:260.4px;" width="8.5" height="9.5" viewBox="0 0 8.5 9.5"><path d="M.7 .8l6.900 3.950L.7 8.700z" fill="#a39f93" stroke="#a39f93" stroke-width=".6" stroke-linejoin="round"/></svg>
<div style="left:1428.9px;top:260.3px;width:1.5px;height:1.2px;background:#8f8b80;"></div>
<div style="left:1428.9px;top:268.8px;width:1.5px;height:1.3px;background:#8f8b80;"></div>
<div style="left:1123.0px;top:277.5px;width:307.0px;height:32.0px;background:#f9f8f6;"></div>
<div style="left:1123.0px;top:309.0px;width:307.0px;height:1.0px;background:#dedbd2;"></div>
<div style="left:1123px;top:278px;width:77px;height:32px;border:1px solid #dedbd2;border-bottom:none;background:#fdfdfc"></div>
<span class="t" style="left:1149.0px;top:284.0px;line-height:20px;font-size:14.5px;color:#111;letter-spacing:0.407px;-webkit-text-stroke:.45px currentColor;">Info</span>
<span class="t" style="left:1228.5px;top:284.0px;line-height:20px;font-size:14.5px;color:#111;letter-spacing:0.536px;-webkit-text-stroke:.45px currentColor;">History</span>
<span class="t" style="left:1138.6px;top:322.0px;line-height:21px;font-size:15.3px;color:#111;letter-spacing:0.086px;-webkit-text-stroke:.45px currentColor;">Selection Details</span>
<svg style="left:1134.9px;top:368.8px;" width="16.0" height="18.0" viewBox="0 0 16 18"><rect x="1.05" y="1.05" width="13.9" height="15.7" rx="2.5" fill="none" stroke="#1414ff" stroke-width="2"/><path d="M4.3 5.7h7.4M4.3 9h7.4M4.3 12.3h7.4" stroke="#1414ff" stroke-width="1.8"/></svg>
<span class="t" style="left:1162.9px;top:366.0px;line-height:20px;font-size:14.3px;color:#1414ff;letter-spacing:0.104px;">Datetime</span>
<span class="t" style="left:1322.1px;top:367.0px;line-height:19px;font-size:13.4px;color:#8b877d;letter-spacing:-0.104px;">ID</span>
<span class="t" style="left:1339.1px;top:367.0px;line-height:19px;font-size:13.6px;color:#111;letter-spacing:-0.170px;">SFKc1aRGBu</span>
<div style="left:1131px;top:398px;width:291.7px;height:28px;border-radius:4px;background:#f9f8f6"></div>
<span class="t" style="left:1136.9px;top:401.0px;line-height:20px;font-size:14.3px;color:#222;letter-spacing:0.037px;">next 24 hours</span>
<div style="left:1123.0px;top:433.3px;width:307.0px;height:53.0px;background:#ffffff;"></div>
<div style="left:1131.3px;top:444.2px;width:35.4px;height:31.6px;border-radius:6px;background:#fcfcfb"></div>
<div style="left:1175.4px;top:444.2px;width:35.4px;height:31.6px;border-radius:6px;background:#fcfcfb"></div>
<div style="left:1343.2px;top:444.2px;width:35.4px;height:31.6px;border-radius:6px;background:#fcfcfb"></div>
<div style="left:1387.3px;top:444.2px;width:35.4px;height:31.6px;border-radius:6px;background:#fcfcfb"></div>
<svg style="left:1141.0px;top:452.0px;" width="16.0" height="16.0" viewBox="0 0 16 16"><g fill="none" stroke="#111" stroke-width="1.9" stroke-linecap="round"><path d="M6.9 9.1a3 3 0 0 1 0-4.2l2.1-2.1a3 3 0 0 1 4.2 4.2l-1 1"/><path d="M9.1 6.9a3 3 0 0 1 0 4.2l-2.1 2.1a3 3 0 0 1-4.2-4.2l1-1"/></g></svg>
<div style="left:1191.9px;top:454.0px;width:2.5px;height:12.1px;background:#111;"></div>
<div style="left:1187.0px;top:458.8px;width:12.3px;height:2.5px;background:#111;"></div>
<svg style="left:1354.0px;top:455.0px;" width="14.0" height="10.0" viewBox="0 0 14 10"><path d="M1.9 5.1C3.3 2.7 5 1.5 7 1.5s3.700 1.200 5.100 3.600" fill="none" stroke="#111" stroke-width="2" stroke-linecap="round"/><circle cx="7" cy="6.6" r="2.35" fill="#111"/></svg>
<svg style="left:1397.0px;top:451.5px;" width="16.0" height="17.0" viewBox="0 0 16 17"><g fill="none" stroke="#d0112b" stroke-width="2" stroke-linecap="round"><path d="M1.9 4.3h12.200M5.500 4C5.800 2 6.700 1.250 8 1.250s2.200.750 2.500 2.750" stroke-width="1.7"/><path d="M3.200 7.400l.9 5.800c.2 1.300.9 1.900 2.100 1.900h3.600c1.200 0 1.900-.6 2.100-1.900l.9-5.800"/></g></svg>
<div style="left:1123.0px;top:493.8px;width:307.0px;height:53.0px;background:#ffffff;"></div>
<div style="left:1131.3px;top:504.2px;width:35.4px;height:31.6px;border-radius:6px;background:#fcfcfb"></div>
<div style="left:1175.4px;top:504.2px;width:35.4px;height:31.6px;border-radius:6px;background:#fcfcfb"></div>
<div style="left:1343.2px;top:504.2px;width:35.4px;height:31.6px;border-radius:6px;background:#fcfcfb"></div>
<div style="left:1387.3px;top:504.2px;width:35.4px;height:31.6px;border-radius:6px;background:#fcfcfb"></div>
<svg style="left:1141.0px;top:512.0px;" width="16.0" height="16.0" viewBox="0 0 16 16"><g fill="none" stroke="#111" stroke-width="1.9" stroke-linecap="round"><path d="M6.9 9.1a3 3 0 0 1 0-4.2l2.1-2.1a3 3 0 0 1 4.2 4.2l-1 1"/><path d="M9.1 6.9a3 3 0 0 1 0 4.2l-2.1 2.1a3 3 0 0 1-4.2-4.2l1-1"/></g></svg>
<div style="left:1191.9px;top:514.0px;width:2.5px;height:12.1px;background:#111;"></div>
<div style="left:1187.0px;top:518.8px;width:12.3px;height:2.5px;background:#111;"></div>
<svg style="left:1354.0px;top:515.0px;" width="14.0" height="10.0" viewBox="0 0 14 10"><path d="M1.9 5.1C3.3 2.7 5 1.5 7 1.5s3.700 1.200 5.100 3.600" fill="none" stroke="#111" stroke-width="2" stroke-linecap="round"/><circle cx="7" cy="6.6" r="2.35" fill="#111"/></svg>
<svg style="left:1397.0px;top:511.5px;" width="16.0" height="17.0" viewBox="0 0 16 17"><g fill="none" stroke="#d0112b" stroke-width="2" stroke-linecap="round"><path d="M1.9 4.3h12.200M5.500 4C5.800 2 6.700 1.250 8 1.250s2.200.750 2.500 2.750" stroke-width="1.7"/><path d="M3.200 7.400l.9 5.800c.2 1.300.9 1.900 2.100 1.900h3.600c1.200 0 1.900-.6 2.100-1.900l.9-5.800"/></g></svg>
<div style="left:1123.0px;top:539.5px;width:307.0px;height:24.5px;background:#f0efec;"></div>
<div style="left:1134.8px;top:546.2px;width:2.4px;height:2.4px;background:#4b4741;"></div>
<div style="left:1138.7px;top:546.2px;width:2.4px;height:2.4px;background:#4b4741;"></div>
<div style="left:1134.8px;top:550.2px;width:2.4px;height:2.4px;background:#4b4741;"></div>
<div style="left:1138.7px;top:550.2px;width:2.4px;height:2.4px;background:#4b4741;"></div>
<div style="left:1134.8px;top:554.2px;width:2.4px;height:2.4px;background:#4b4741;"></div>
<div style="left:1138.7px;top:554.2px;width:2.4px;height:2.4px;background:#4b4741;"></div>
<svg style="left:1411.5px;top:546.9px;" width="8.5" height="9.5" viewBox="0 0 8.5 9.5"><path d="M.7 .8l6.900 3.950L.7 8.700z" fill="#a39f93" stroke="#a39f93" stroke-width=".6" stroke-linejoin="round"/></svg>
<div style="left:1428.9px;top:546.8px;width:1.5px;height:1.2px;background:#8f8b80;"></div>
<div style="left:1428.9px;top:555.3px;width:1.5px;height:1.3px;background:#8f8b80;"></div>
<div style="left:1123.0px;top:564.0px;width:307.0px;height:32.0px;background:#f9f8f6;"></div>
<div style="left:1123.0px;top:596.0px;width:307.0px;height:1.0px;background:#dedbd2;"></div>
<div style="left:1227px;top:565px;width:111px;height:32px;border:1px solid #dedbd2;border-bottom:none;background:#fdfdfc"></div>
<span class="t" style="left:1149.0px;top:571.0px;line-height:20px;font-size:14.5px;color:#222;letter-spacing:-0.106px;-webkit-text-stroke:.45px currentColor;">Regions</span>
<span class="t" style="left:1252.3px;top:571.0px;line-height:20px;font-size:14.5px;color:#222;-webkit-text-stroke:.45px currentColor;">Relations</span>
<span class="t" style="left:1143.0px;top:613.0px;line-height:21px;font-size:15px;color:#111;letter-spacing:0.167px;-webkit-text-stroke:.5px currentColor;">Relations (3)</span>
<svg style="left:1257.0px;top:619.3px;" width="14.0" height="10.0" viewBox="0 0 14 10"><path d="M1.9 5.1C3.3 2.7 5 1.5 7 1.500s3.700 1.200 5.100 3.600" fill="none" stroke="#111" stroke-width="2" stroke-linecap="round"/><circle cx="7" cy="6.6" r="2.350" fill="#111"/></svg>
<svg style="left:1284.0px;top:618.0px;" width="15.0" height="14.0" viewBox="0 0 15 14"><g stroke="#111" stroke-width="1.4" fill="none"><path d="M.6 3.4h3M.6 7.3h5M.6 11.2h7M11.6 12.6V1.6M9.4 4l2.2-2.4L13.8 4"/></g></svg>
<svg style="left:1141.5px;top:657.5px;" width="14.0" height="19.0" viewBox="0 0 14 19"><path d="M1.3 19V6.4a3 3 0 0 1 3-3h5" fill="none" stroke="#b7b2a4" stroke-width="1.8"/><circle cx="10.6" cy="3.3" r="2.4" fill="#b7b2a4"/></svg>
<svg style="left:1167.1px;top:656.0px;" width="16.0" height="18.0" viewBox="0 0 16 18"><rect x="1.05" y="1.05" width="13.9" height="15.7" rx="2.5" fill="none" stroke="#d400ff" stroke-width="2"/><path d="M4.3 5.7h7.4M4.3 9h7.4M4.3 12.3h7.4" stroke="#d400ff" stroke-width="1.8"/></svg>
<span class="t" style="left:1194.8px;top:653.0px;line-height:20px;font-size:14.3px;color:#d400ff;letter-spacing:-0.390px;">Brand</span>
<div style="left:1168.0px;top:674.6px;width:14.5px;height:2.0px;background:#008000;"></div>
</div>
</body>
</html>
